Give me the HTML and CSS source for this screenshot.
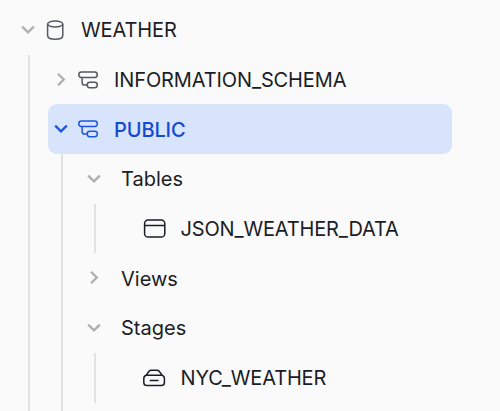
FILE: index.html
```html
<!DOCTYPE html>
<html lang="en">
<head>
<meta charset="utf-8">
<title>Databases</title>
<link rel="stylesheet" href="styles.css">
</head>
<body>
<svg class="defs" width="0" height="0" aria-hidden="true">
  <symbol id="down" viewBox="0 0 16 20"><path d="M2.2 6.7 8 12.3l5.8-5.6"/></symbol>
  <symbol id="right" viewBox="0 0 16 20"><path d="M5 3.8 10.8 9.5 5 15.2"/></symbol>
  <symbol id="schema" viewBox="0 0 24 24"><rect x="2.8" y="4.1" width="18.5" height="5.4" rx="2.7"/><rect x="11.2" y="14.3" width="10.1" height="5.4" rx="2.6"/><path d="M6.1 9.5v4.9q0 2.6 2.7 2.6h2.4"/></symbol>
</svg>
<main class="tree">
  <div class="row root">
    <svg class="chevron"><use href="#down"/></svg>
    <svg class="icon" viewBox="0 0 24 24"><ellipse cx="12.2" cy="6" rx="7.6" ry="3"/><path d="M4.6 6v11.4c0 2.2 2.4 3.8 7.6 3.8s7.6-1.6 7.6-3.8V6"/></svg>
    <span class="label">WEATHER</span>
  </div>
  <div class="group schemas">
    <div class="row schema">
      <svg class="chevron"><use href="#right"/></svg>
      <svg class="icon"><use href="#schema"/></svg>
      <span class="label">INFORMATION_SCHEMA</span>
    </div>
    <div class="row schema selected">
      <svg class="chevron"><use href="#down"/></svg>
      <svg class="icon"><use href="#schema"/></svg>
      <span class="label">PUBLIC</span>
    </div>
    <div class="group kinds">
      <div class="row kind">
        <svg class="chevron"><use href="#down"/></svg>
        <span class="label">Tables</span>
      </div>
      <div class="group objects">
        <div class="row object">
          <svg class="icon" viewBox="0 0 24 24"><rect x="2.6" y="3" width="20.2" height="17.1" rx="3.6"/><path d="M2.7 8.5h20"/></svg>
          <span class="label">JSON_WEATHER_DATA</span>
        </div>
      </div>
      <div class="row kind">
        <svg class="chevron"><use href="#right"/></svg>
        <span class="label">Views</span>
      </div>
      <div class="row kind">
        <svg class="chevron"><use href="#down"/></svg>
        <span class="label">Stages</span>
      </div>
      <div class="group objects">
        <div class="row object">
          <svg class="icon" viewBox="0 0 24 24"><path d="M4.2 9.2h16q2.2.8 2.2 3v4.3q0 3-3 3H4.8q-3 0-3-3v-4.3q0-2.2 2.4-3L7.1 5.1q.9-.9 2.2-.9h5.6q1.3 0 2.2.9l3.1 4.1M7.7 14.5h8.8"/></svg>
          <span class="label">NYC_WEATHER</span>
        </div>
      </div>
    </div>
  </div>
</main>
</body>
</html>
```
FILE: styles.css
```css
* { box-sizing: border-box; }

body {
  margin: 0;
  background: #fafafa;
  color: #1b1d26;
  font: 400 20px/1 Inter, "Liberation Sans", sans-serif;
}

.defs { display: block; }
.tree {
  display: flex;
  flex-direction: column;
  height: 411px;
  padding-top: 5px;
}

.row {
  display: flex;
  align-items: center;
  height: 49.7px;
}

.root { padding-left: 20px; }
.group { border-left: 2px solid #e2e2e3; }
.schemas {
  display: flex;
  flex: 1;
  flex-direction: column;
  margin-left: 28px;
}
.schema {
  width: 404px;
  margin-left: 18px;
  padding-left: 5px;
  border-radius: 9px;
}
.kinds { flex: 1; margin-left: 31px; }
.kind { padding-left: 23px; }
.objects { width: 350px; margin-left: 31px; }
.object { padding-left: 46px; }

.chevron,
.icon {
  flex: none;
  fill: none;
  stroke: currentColor;
}
.chevron {
  width: 16px;
  height: 20px;
  color: #adaeb1;
  stroke-width: 2.3;
}
.icon {
  width: 24px;
  height: 24px;
  stroke-width: 1.5;
  stroke-linejoin: round;
}
.root .icon, .schema .icon { margin-left: 7px; color: #555861; }
.label { padding-top: 0.6px; white-space: nowrap; }
.root .label, .schema .label {
  margin-left: 14px;
  letter-spacing: -0.12px;
}
.kind .label { margin-left: 19px; }
.object .label { margin-left: 14.6px; letter-spacing: -0.17px; }

.selected {
  background: #d8e4fc;
  color: #124bd0;
  font-weight: 500;
}
.selected .chevron, .selected .icon { color: #1c55df; }
```
